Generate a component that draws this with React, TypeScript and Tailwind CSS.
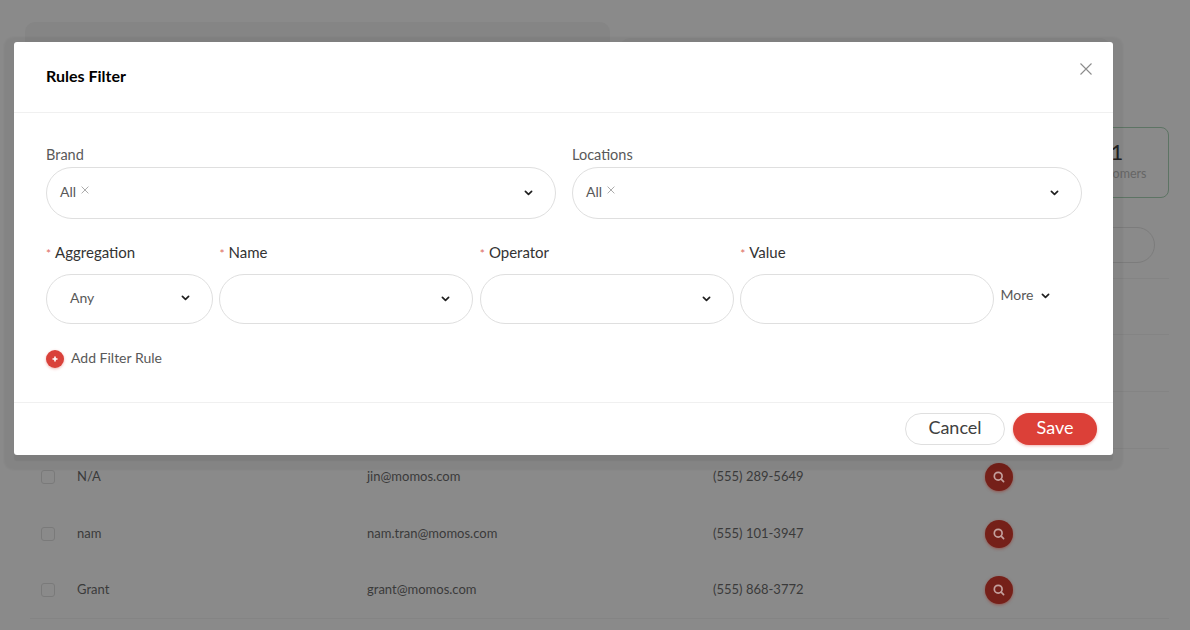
import React from "react";

const font = { fontFamily: '"Lato", "Liberation Sans", sans-serif' };

const Chevron = () => (
  <svg width="9" height="6" viewBox="0 0 9 6" fill="none" aria-hidden="true">
    <path d="M1.4 1.3 4.5 4.3 7.6 1.3" stroke="#1f1f1f" strokeWidth="1.7" strokeLinecap="round" strokeLinejoin="round" />
  </svg>
);

const Tag = () => (
  <span className="flex items-center gap-[5px] pb-[3px] text-[14px] text-[#595959]">
    All
    <svg width="8" height="8" viewBox="0 0 8 8" className="mb-[3px]" aria-hidden="true">
      <path d="M.6.6l6.8 6.8M7.4.6.6 7.4" stroke="#a3a3a3" strokeWidth=".9" />
    </svg>
  </span>
);

const Label = ({ text, required }: { text: string; required?: boolean }) => (
  <div className="h-[21px] text-[15px] leading-[19px] text-[#333]">
    {required && <span className="mr-[4px] text-[12px] text-[#dd6a60]">*</span>}
    {text}
  </div>
);

const rows = [
  { name: "N/A", email: "jin@momos.com", phone: "(555) 289-5649" },
  { name: "nam", email: "nam.tran@momos.com", phone: "(555) 101-3947" },
  { name: "Grant", email: "grant@momos.com", phone: "(555) 868-3772" },
];

const Row = ({ name, email, phone, last }: { name: string; email: string; phone: string; last: boolean }) => (
  <div className={`grid h-[56.7px] grid-cols-[36px_290px_346px_272px_1fr] items-center pl-[11px] text-[13px] text-[#3a3a3a] ${last ? "border-b border-[#848484]" : ""}`}>
    <span className="h-[14px] w-[14px] rounded-[3px] border border-[#7a7a7a]" />
    <span>{name}</span>
    <span>{email}</span>
    <span>{phone}</span>
    <span className="flex h-[28px] w-[28px] items-center justify-center rounded-full bg-[#752019] shadow-[0_1px_3px_rgba(150,50,40,0.6)]">
      <svg width="14" height="14" viewBox="0 0 14 14" fill="none" aria-hidden="true">
        <circle cx="6.2" cy="6.2" r="3.9" stroke="#c4a09d" strokeWidth="1.7" />
        <path d="M9.2 9.2 11.6 11.6" stroke="#c4a09d" strokeWidth="1.7" strokeLinecap="round" />
      </svg>
    </span>
  </div>
);

export default function App() {
  return (
    <div style={font} className="relative h-[630px] w-[1190px] overflow-hidden bg-[#8a8a8a]">
      {/* page behind the scrim */}
      <div className="px-[21px] pt-[22px]">
        <div className="flex h-[105px] gap-[10px] pl-[4px]">
          <div className="h-[80px] w-[585px] rounded-[10px] bg-[#858585]" />
          <div className="mt-[16px] h-[70px] w-[490px] rounded-[10px] bg-[#868686]" />
        </div>
        <div className="flex justify-end">
          <div className="flex h-[71px] w-[104px] flex-col items-center rounded-[8px] border border-[#5d7464] pt-[11px]">
            <span className="text-[22px] leading-[26px] text-[#222]">1</span>
            <span className="text-[12.5px] leading-[18px] text-[#666]">Customers</span>
          </div>
        </div>
        <div className="mr-[14px] mt-[29px] flex justify-end">
          <div className="h-[36px] w-[160px] rounded-full border border-[#7c7c7c]" />
        </div>
        <div className="ml-[9px] mt-[15px] border-t border-[#848484]">
          <div className="h-[56px] border-b border-[#848484]" />
          <div className="h-[56.7px] border-b border-[#848484]" />
          <div className="h-[57px] border-b border-[#848484]" />
          {rows.map((r, i) => (
            <Row key={r.name} {...r} last={i === rows.length - 1} />
          ))}
        </div>
      </div>

      {/* modal */}
      <div className="absolute left-[14px] top-[42px] flex h-[413px] w-[1099px] flex-col rounded-[3px] bg-white shadow-[0_6px_1px_0_rgba(0,0,0,0.05),0_5px_2px_10px_rgba(0,0,0,0.045)]">
        <div className="flex h-[71px] shrink-0 items-start justify-between border-b border-[#f0f0f0] pl-[32px] pr-[21px]">
          <h2 className="pt-[23px] text-[16px] font-bold leading-[22px] text-black">Rules Filter</h2>
          <svg width="12" height="12" viewBox="0 0 12 12" className="mt-[21px]" aria-hidden="true">
            <path d="M.5.5l11 11M11.5.5l-11 11" stroke="#8c8c8c" strokeWidth="1.1" />
          </svg>
        </div>

        <div className="flex-1 pl-[32px] pr-[32px] pt-[32px]">
          <div className="grid grid-cols-[510px_510px] gap-[16px]">
            {["Brand", "Locations"].map((label) => (
              <div key={label}>
                <div className="h-[22px] text-[14.5px] leading-[19px] text-[#595959]">{label}</div>
                <div className="flex h-[52px] items-center justify-between rounded-[26px] border border-[#dfdfdf] pl-[13px] pr-[22px]">
                  <Tag />
                  <Chevron />
                </div>
              </div>
            ))}
          </div>

          <div className="mt-[24px] flex gap-[6.4px]">
            <div className="w-[167px]">
              <Label text="Aggregation" required />
              <div className="mt-[10px] flex h-[50px] items-center justify-between rounded-[25px] border border-[#dfdfdf] pl-[23px] pr-[22px]">
                <span className="pb-[3px] text-[14px] text-[#595959]">Any</span>
                <span className="flex pb-[3px]"><Chevron /></span>
              </div>
            </div>
            {["Name", "Operator"].map((label) => (
              <div key={label} className="w-[254px]">
                <Label text={label} required />
                <div className="mt-[10px] flex h-[50px] items-center justify-end rounded-[25px] border border-[#dfdfdf] pr-[22px]">
                  <Chevron />
                </div>
              </div>
            ))}
            <div className="w-[254px]">
              <Label text="Value" required />
              <div className="mt-[10px] h-[50px] rounded-[25px] border border-[#dfdfdf]" />
            </div>
            <div className="flex h-[64px] items-end gap-[8px] pb-[2px] text-[14px] text-[#595959]">
              <span className="leading-[21px]">More</span>
              <span className="mb-[6px] flex"><Chevron /></span>
            </div>
          </div>

          <div className="mt-[23px] flex items-center gap-[7px]">
            <span className="flex h-[18px] w-[18px] items-center justify-center rounded-full bg-[#d9413a] shadow-[0_1px_3px_rgba(217,65,58,0.4)]">
              <svg width="6" height="6" viewBox="0 0 6 6" aria-hidden="true">
                <path d="M3 .5v5M.5 3h5" stroke="#fff" strokeWidth="1.6" />
              </svg>
            </span>
            <span className="pb-[2px] text-[14px] text-[#595959]">Add Filter Rule</span>
          </div>
        </div>

        <div className="flex h-[53px] shrink-0 items-start justify-end gap-[8px] border-t border-[#f0f0f0] pr-[16px] pt-[10px]">
          <button className="h-[32px] w-[100px] rounded-full border border-[#dfdfdf] bg-white pb-[3px] text-[18px] text-[#404040]">Cancel</button>
          <button className="h-[32px] w-[84px] rounded-full bg-[#dc4038] pb-[3px] text-[18px] text-white shadow-[0_1px_3px_rgba(217,65,58,0.4)]">Save</button>
        </div>
      </div>
    </div>
  );
}
